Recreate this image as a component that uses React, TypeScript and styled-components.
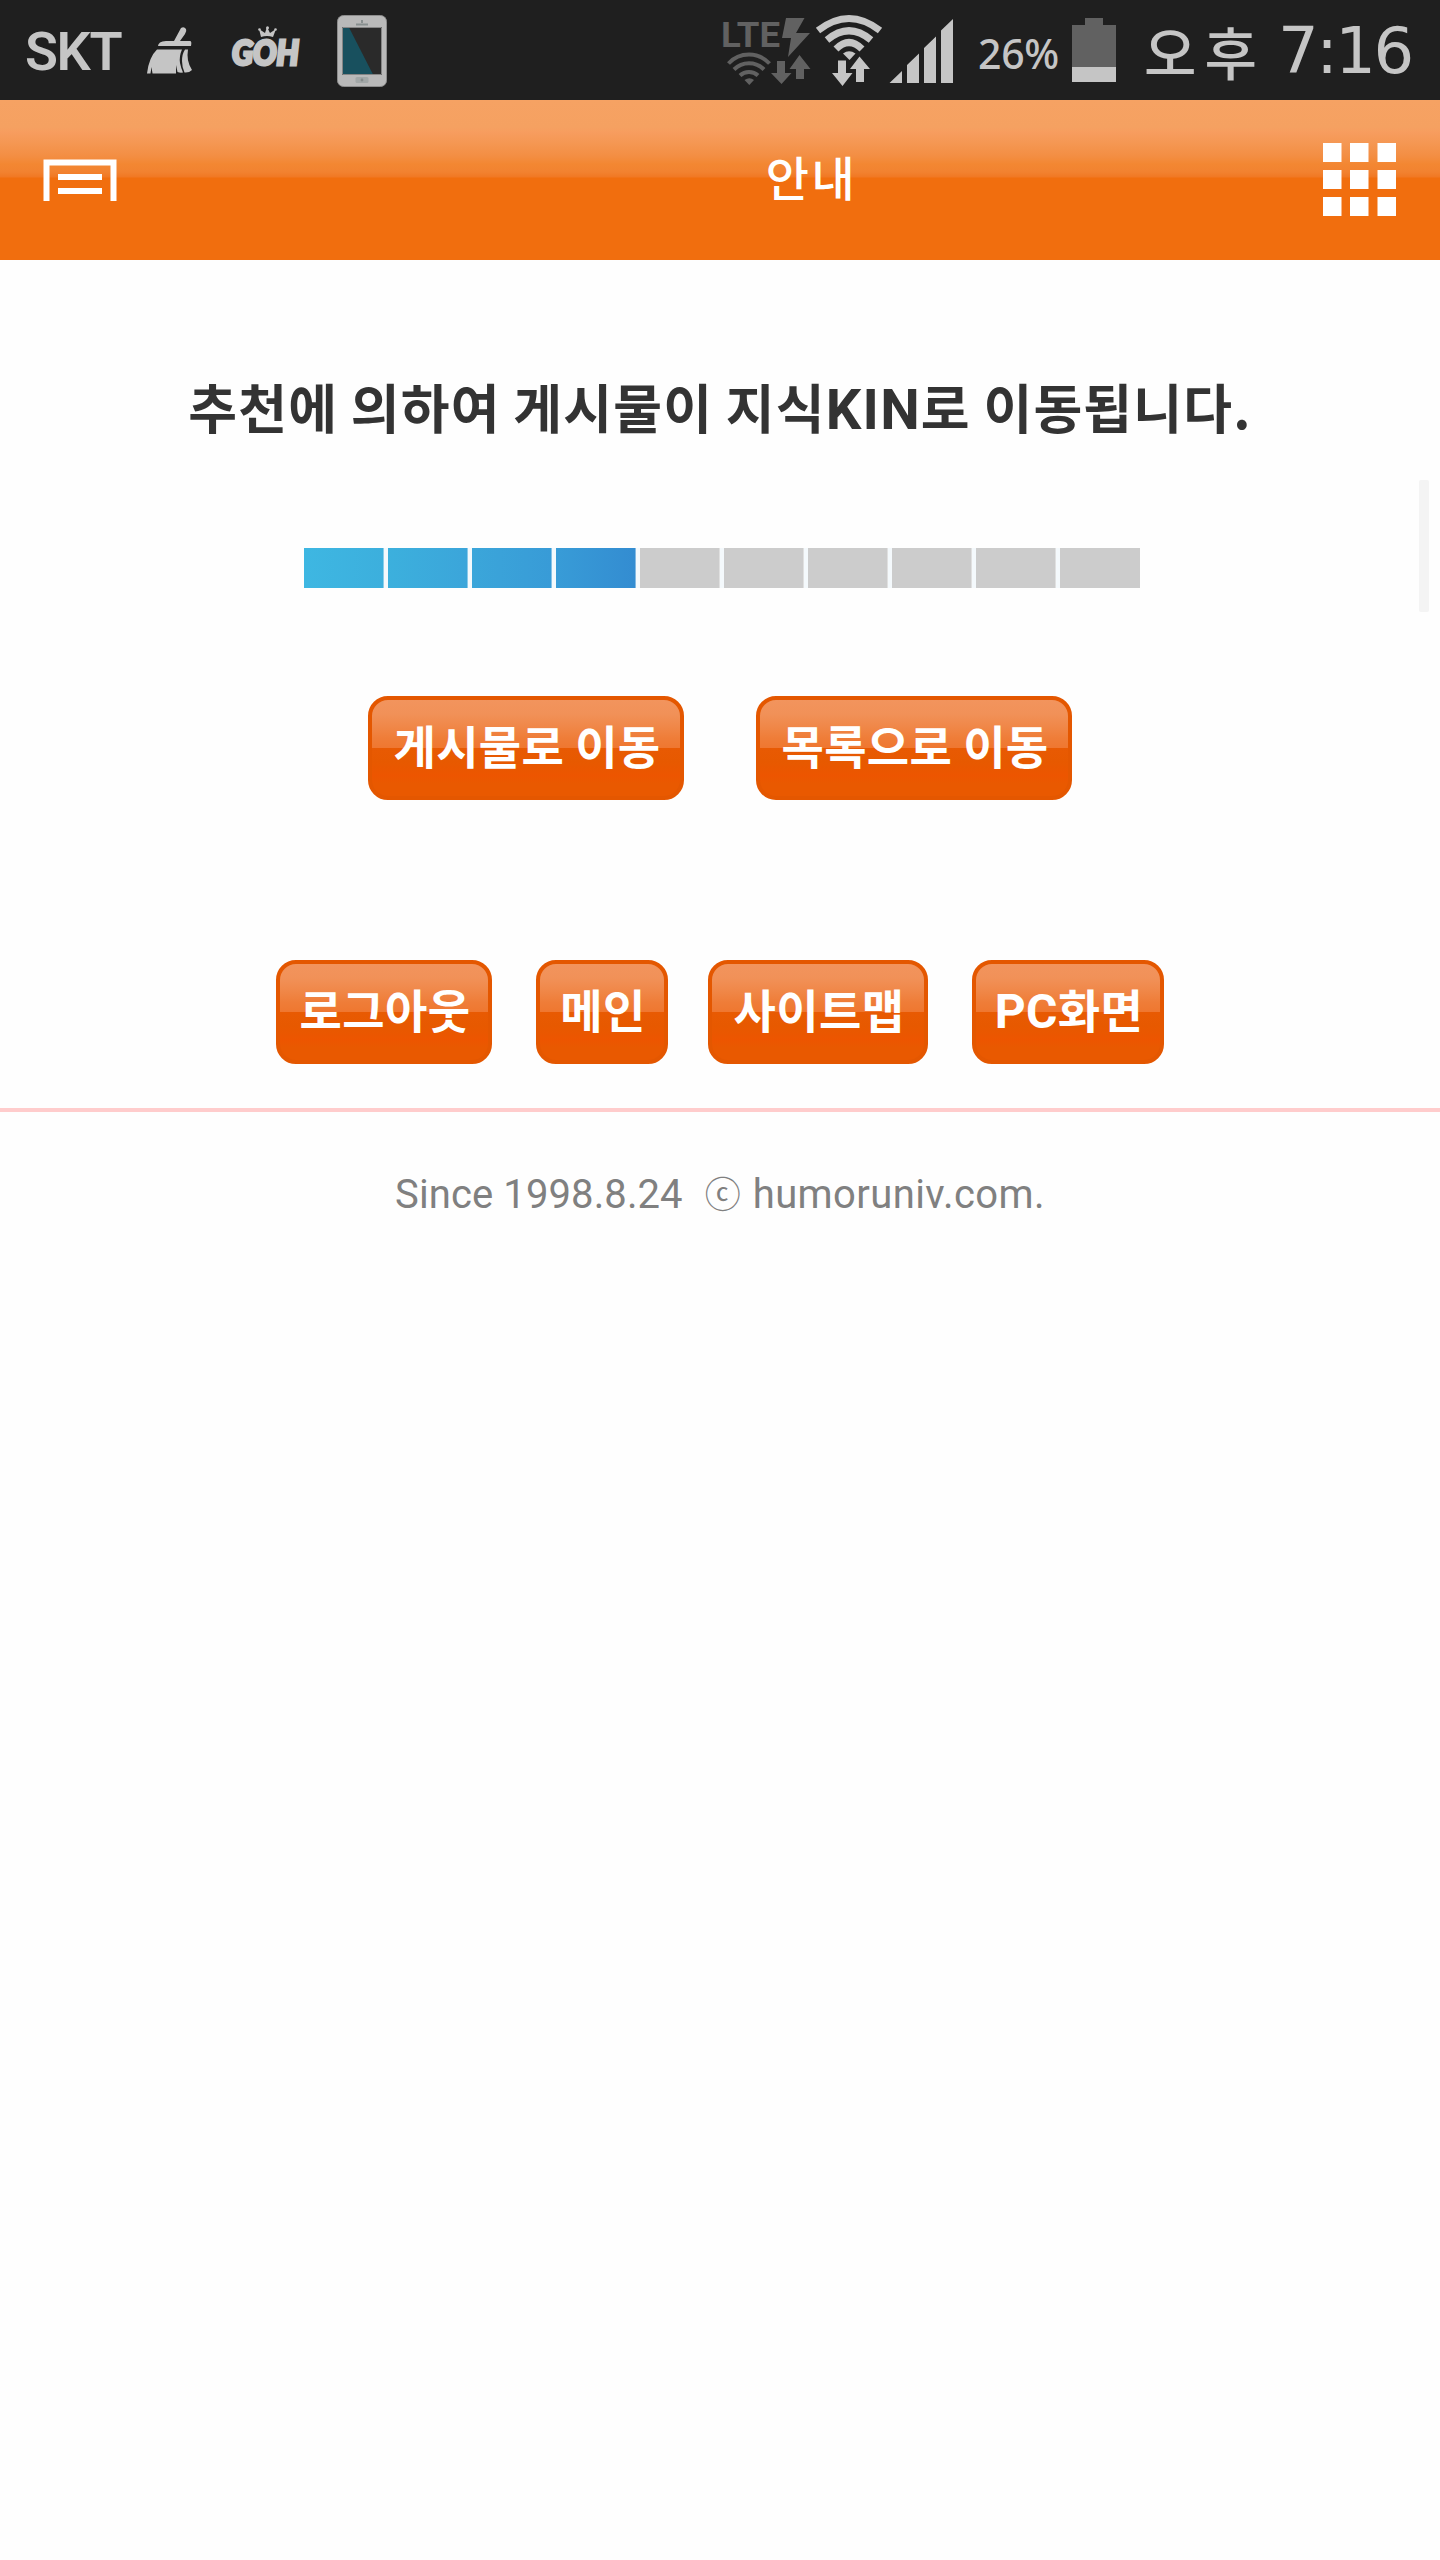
import React from "react";
import styled, { createGlobalStyle } from "styled-components";

const GlobalStyle = createGlobalStyle`
  * { box-sizing: border-box; }
  body {
    margin: 0;
    background: #fff;
    font-family: Roboto, "Noto Sans CJK KR", sans-serif;
  }
`;

const Screen = styled.div`
  width: 1440px;
  height: 2560px;
  display: flex;
  flex-direction: column;
  background: #fefefe;
  overflow: hidden;
`;

const StatusBar = styled.header`
  height: 100px;
  flex: none;
  display: flex;
  align-items: center;
  justify-content: space-between;
  background: #1f1f1f;
  color: #c5c5c5;
  padding: 0 25px 0 25px;
`;

const StatusGroup = styled.div`
  height: 100px;
  display: flex;
  align-items: center;
`;

const StatusText = styled.span<{ $size: number; $width: number; $weight?: number; $font?: string; $spacing?: number; $left?: number; $drop?: number }>`
  flex: none;
  width: ${(p) => p.$width}px;
  margin-left: ${(p) => p.$left ?? 0}px;
  padding-top: ${(p) => p.$drop ?? 0}px;
  font-family: ${(p) => p.$font ?? "Roboto, sans-serif"};
  font-size: ${(p) => p.$size}px;
  font-weight: ${(p) => p.$weight ?? 400};
  letter-spacing: ${(p) => p.$spacing ?? 0}px;
  line-height: 1;
  white-space: nowrap;
`;

const StatusIcon = styled.svg<{ $left?: number }>`
  flex: none;
  display: block;
  height: 100px;
  margin-left: ${(p) => p.$left ?? 0}px;
  overflow: visible;
`;

const TitleBar = styled.nav`
  height: 160px;
  flex: none;
  display: flex;
  align-items: flex-start;
  justify-content: space-between;
  padding: 0 43px;
  background: linear-gradient(
    #f6a263 0, #f5a161 27px, #f79d5f 32px, #f59854 42px, #f38e43 56px,
    #f38732 64px, #f28230 72px, #f17823 77px, #f16e0e 78px, #f16e0e 100%
  );
`;

const Title = styled.h1`
  margin: 44px 0 0 183px;
  height: 64px;
  color: #fff;
  font-family: "Noto Sans CJK KR", sans-serif;
  font-size: 47px;
  font-weight: 500;
  letter-spacing: 2.5px;
  line-height: 64px;
`;

const IconButton = styled.button<{ $top: number }>`
  margin: ${(p) => p.$top}px 0 0;
  padding: 0;
  border: 0;
  background: none;
  line-height: 0;
`;

const Content = styled.main`
  display: flex;
  flex-direction: column;
  align-items: center;
  position: relative;
`;

const Message = styled.p`
  margin: 106px 0 0;
  height: 80px;
  color: #333;
  font-family: "Noto Sans CJK KR", sans-serif;
  font-size: 53px;
  font-weight: 700;
  letter-spacing: 1.2px;
  word-spacing: -0.6px;
  line-height: 80px;
  white-space: nowrap;
`;

const Latin = styled.span<{ $size: number }>`
  font-family: Roboto, sans-serif;
  font-size: ${(p) => p.$size}px;
  line-height: 1;
`;

const Progress = styled.div`
  width: 836px;
  height: 40px;
  margin: 102px 0 0 4px;
  display: grid;
  grid-template-columns: repeat(10, 1fr);
  gap: 4px;
  background: #f4f9fc;
`;

const Segment = styled.div<{ $from: string; $to: string }>`
  background: linear-gradient(90deg, ${(p) => p.$from}, ${(p) => p.$to});

  &:not(:last-child) {
    box-shadow: inset -1px 0 rgba(255, 255, 255, 0.4);
  }
`;

const ScrollThumb = styled.div`
  position: absolute;
  top: 220px;
  right: 11px;
  width: 10px;
  height: 132px;
  border-radius: 2px;
  background: #f4f4f4;
`;

const ButtonRow = styled.div<{ $top: number }>`
  display: flex;
  margin-top: ${(p) => p.$top}px;
`;

const GlossButton = styled.button<{ $width: number; $left?: number }>`
  width: ${(p) => p.$width}px;
  height: 104px;
  margin: 0 0 0 ${(p) => p.$left ?? 0}px;
  padding: 0 0 8px 2px;
  border: 4px solid #e45700;
  border-radius: 20px;
  background: linear-gradient(
    #f2945d 0, #f19158 14px, #f08748 27px, #ef7d38 38px, #ef7730 48px,
    #e85a03 48px, #e75900 62px, #ed5500 76px, #e95900 84px, #e95900 100%
  );
  color: #fff;
  font-family: "Noto Sans CJK KR", sans-serif;
  font-size: 46px;
  font-weight: 700;
  letter-spacing: 0.4px;
  line-height: 88px;
  white-space: nowrap;
`;

const Footer = styled.footer`
  width: 100%;
  height: 140px;
  margin-top: 44px;
  border-top: 4px solid #ffcccc;
  padding-top: 59px;
  display: flex;
  justify-content: center;
  color: #808080;
  font-size: 40px;
  line-height: 48px;
  white-space: pre;
`;

const FooterText = styled.span<{ $spacing: number }>`
  letter-spacing: ${(p) => p.$spacing}px;
`;

const CopyrightSign = styled.span`
  font-family: "Noto Sans CJK KR", sans-serif;
  font-weight: 400;
  font-size: 36px;
  line-height: 43px;
  margin: 0 12px 0 22px;
`;

const FILLED = [
  ["#3eb7e2", "#3cafdd"],
  ["#3cb0dd", "#3ba5da"],
  ["#3ba6da", "#389bd7"],
  ["#389cd7", "#338cd1"],
];
const SEGMENTS = Array.from({ length: 10 }, (_, i) => FILLED[i] ?? ["#cccccc", "#cccccc"]);

const Broom = () => (
  <StatusIcon width="46" viewBox="147 0 46 100" $left={27} fill="#c5c5c5">
    <path d="M181 28Q184 26 186 29Q187 31 185 34L180 41H190Q192 41 191 46H158Q158 44 160 42.500Q162 41 166 41H174Z" />
    <path d="M157 49.500H182Q179 56 180 63Q181 68 183 72.500Q180 73 177.500 72L176 65V73.500H152.500L151.500 67L150.500 73.500H147Q149 57 157 49.500Z" />
    <path d="M185 49.500H188Q186 61 192 70Q189 73 184.500 72.500Q182 67 182 61Q182 54 185 49.500Z" />
  </StatusIcon>
);

const GohLogo = () => (
  <StatusIcon width="72" viewBox="230 0 72 100" $left={37} fill="#c5c5c5">
    <path d="M259 29L262 31L265 33L267 27L270 33L273 31L276 29L273 37Q267 35 261 37Z" />
    <circle cx="259.500" cy="29.500" r="1.300" />
    <circle cx="267.500" cy="27.800" r="1.500" />
    <circle cx="275.500" cy="29.500" r="1.300" />
    <text
      x="232"
      y="65"
      fontFamily="Lato, sans-serif"
      fontSize="34"
      fontWeight="900"
      fontStyle="italic"
      stroke="#c5c5c5"
      strokeWidth="3"
      textLength="67"
      lengthAdjust="spacingAndGlyphs"
    >
      GOH
    </text>
  </StatusIcon>
);

const Phone = () => (
  <StatusIcon width="52" viewBox="336 0 52 100" $left={34}>
    <rect x="337.500" y="15.500" width="49" height="71" rx="6" fill="#b9b9b9" stroke="#8d8d8d" />
    <rect x="342" y="27" width="40" height="48" fill="#2a2a2a" />
    <path d="M342.500 27.500H349L373 74.500H342.500Z" fill="#18505e" />
    <path d="M342.500 27.500H381.500V74.500H342.500Z" fill="none" stroke="#858585" />
    <path d="M356 24.500H368" stroke="#878e8e" strokeWidth="2" />
    <path d="M362 20V23" stroke="#878e8e" strokeWidth="2" />
    <rect x="355.500" y="77" width="13" height="6" rx="1.500" fill="#a2a7a7" />
    <circle cx="362" cy="80" r="1.400" fill="#858b8b" />
  </StatusIcon>
);

const LteSignal = () => (
  <StatusIcon width="88" viewBox="722 0 88 100" fill="#616161">
    <text x="721" y="46.800" fontFamily="Roboto, sans-serif" fontSize="35" fontWeight="700" textLength="59" lengthAdjust="spacingAndGlyphs">LTE</text>
    <path d="M786 18H804.500L796 33H810L788 57L791 38H782Z" />
    <g fill="none" stroke="#616161" strokeWidth="4">
      <path d="M728.500 63.500A28 28 0 0 1 769.500 63.500" />
      <path d="M734 69.500A21 21 0 0 1 764 69.500" />
      <path d="M740 75.500A13 13 0 0 1 758 75.500" />
    </g>
    <path d="M744.500 80Q749.500 76.500 754 80L749.300 85Z" />
    <path d="M777 61H785V73H791.500L781.500 84L771 73H777Z" />
    <path d="M799.500 55L810.500 69H804V79H796V69H789.500Z" />
  </StatusIcon>
);

const Wifi = () => (
  <StatusIcon width="68" viewBox="815 0 68 100" $left={5} fill="#c5c5c5">
    <g fill="none" stroke="#c5c5c5" strokeWidth="7">
      <path d="M818 30.500Q849 6.500 880 30.500" />
      <path d="M827 40Q849 21.500 871 40" />
      <path d="M836 49Q849 36 862 49" />
    </g>
    <path d="M843 53.500Q849 49 855.500 53.500L849.500 60Z" />
    <path d="M838 60.500H846V73H852.500L842.500 86L832 73H838Z" />
    <path d="M859.500 56.500L870 69H864V82H856V69H850Z" />
  </StatusIcon>
);

const SignalBars = () => (
  <StatusIcon width="64" viewBox="889 0 64 100" $left={6} fill="#c5c5c5">
    <path d="M889.500 83L902 71V83ZM907 83V65L919 53.500V83ZM924 83V48L936 36.500V83ZM941 83V30.500L953 19V83Z" />
  </StatusIcon>
);

const Battery = () => (
  <StatusIcon width="44" viewBox="1072 0 44 100" $left={12}>
    <path d="M1072 67V25H1085V18H1103V25H1116V67Z" fill="#616161" />
    <path d="M1072 67H1116V82H1072Z" fill="#c5c5c5" />
  </StatusIcon>
);

export default function App() {
  return (
    <>
      <GlobalStyle />
      <Screen>
        <StatusBar>
          <StatusGroup>
            <StatusText $size={54} $width={95} $weight={600} $spacing={-1.4} $drop={3}>SKT</StatusText>
            <Broom />
            <GohLogo />
            <Phone />
          </StatusGroup>
          <StatusGroup>
            <LteSignal />
            <Wifi />
            <SignalBars />
            <StatusText $size={41} $width={82} $left={25} $drop={7} $spacing={-0.3} $weight={500} $font={'"Noto Sans", sans-serif'}>26%</StatusText>
            <Battery />
            <StatusText $size={57} $width={122} $left={28} $spacing={8} $weight={500} $font={'"Noto Sans CJK KR", sans-serif'}>오후</StatusText>
            <StatusText $size={64} $width={137} $left={12} $spacing={-2.5} $drop={2} $font={'"DejaVu Sans", sans-serif'}>7:16</StatusText>
          </StatusGroup>
        </StatusBar>

        <TitleBar>
          <IconButton $top={59} aria-label="menu">
            <svg width="74" height="42" viewBox="0 0 74 42" fill="none" stroke="#fff" strokeWidth="6">
              <path d="M3.500 42V3.500H70.500V42M15 18H59M15 32H59" />
            </svg>
          </IconButton>
          <Title>안내</Title>
          <IconButton $top={43} aria-label="apps">
            <svg width="74" height="74" viewBox="0 0 74 74" fill="#fff">
              {[0, 27, 54].map((y) => [0, 27, 54.5].map((x) => <rect key={`${x}-${y}`} x={x} y={y} width="18.500" height="19" />))}
            </svg>
          </IconButton>
        </TitleBar>

        <Content>
          <ScrollThumb />
          <Message>
            추천에 의하여 게시물이 지식<Latin $size={56}>KIN</Latin>로 이동됩니다.
          </Message>
          <Progress>
            {SEGMENTS.map(([from, to], i) => (
              <Segment key={i} $from={from} $to={to} />
            ))}
          </Progress>
          <ButtonRow $top={108}>
            <GlossButton $width={316}>게시물로 이동</GlossButton>
            <GlossButton $width={316} $left={72}>목록으로 이동</GlossButton>
          </ButtonRow>
          <ButtonRow $top={160}>
            <GlossButton $width={216}>로그아웃</GlossButton>
            <GlossButton $width={132} $left={44}>메인</GlossButton>
            <GlossButton $width={220} $left={40}>사이트맵</GlossButton>
            <GlossButton $width={192} $left={44}>
              <Latin $size={48}>PC</Latin>화면
            </GlossButton>
          </ButtonRow>
          <Footer>
            <FooterText $spacing={0.1}>Since 1998.8.24</FooterText>
            <CopyrightSign>ⓒ</CopyrightSign>
            <FooterText $spacing={0.4}>humoruniv.com.</FooterText>
          </Footer>
        </Content>
      </Screen>
    </>
  );
}
